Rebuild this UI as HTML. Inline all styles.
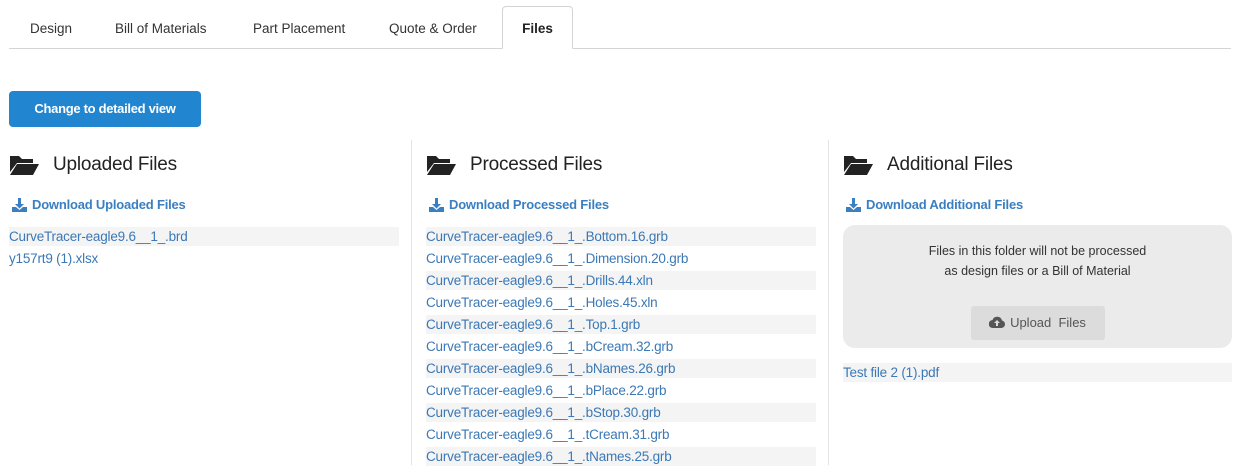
<!DOCTYPE html>
<html><head><meta charset="utf-8"><style>
*{box-sizing:border-box;margin:0;padding:0}
body{width:1234px;height:465px;overflow:hidden;background:#fff;font-family:"Liberation Sans",sans-serif;color:#222;position:relative}
.abs{position:absolute}
.tabline{left:9px;top:48px;width:1222px;height:1px;background:#d4d4d5}
.tab{top:7px;height:43px;line-height:43px;font-size:13.5px;color:#333;white-space:nowrap}
.active{top:6px;left:502px;width:71px;border:1px solid #d4d4d5;border-bottom:1px solid #fff;border-radius:4px 4px 0 0;background:#fff;text-align:center;font-weight:bold;color:#222}
.btn{left:9px;top:91px;width:192px;height:36px;background:#2185d0;border-radius:4px;color:#fff;font-weight:bold;font-size:13px;line-height:36px;text-align:center;letter-spacing:-0.3px}
.div{top:140px;width:1px;height:325px;background:#e3e3e3}
.col{top:152px;width:390px}
h2{font-weight:normal;font-size:19px;color:#222;height:26px;line-height:26px;display:flex;align-items:center;letter-spacing:-0.2px}
h2 svg{margin-right:14px}
.dl{margin-top:17px;font-size:13px;font-weight:bold;color:#3a7fc1;display:flex;align-items:center;height:18px;letter-spacing:-0.2px}
.dl svg{margin:0 5px 0 3px}
.list{margin-top:14px}
.row{height:22px;line-height:19px;font-size:13.5px;color:#3b78b5;letter-spacing:-0.2px}
.row span{display:block;height:19px}
.row:nth-child(odd) span{background:#f4f4f4}
.box{margin-top:12px;height:123px;background:#ebebeb;border-radius:12px;text-align:center;font-size:12.5px;color:#333;padding-top:16px;line-height:20px}
.up{display:inline-block;margin-top:25px;width:134px;height:34px;background:#dcdcdc;border-radius:3px;line-height:34px;color:#555;font-size:13px}
</style></head><body>
<div class="abs tabline"></div>
<div class="abs tab" style="left:30px">Design</div>
<div class="abs tab" style="left:115px">Bill of Materials</div>
<div class="abs tab" style="left:253px">Part Placement</div>
<div class="abs tab" style="left:389px">Quote &amp; Order</div>
<div class="abs tab active">Files</div>
<div class="abs btn">Change to detailed view</div>
<div class="abs div" style="left:411px"></div>
<div class="abs div" style="left:828px"></div>

<div class="abs col" style="left:9px">
<h2><svg width="30" height="22" viewBox="0 0 30 22"><path d="M1 2h9l3 3h11v4H8L1 18z" fill="#222"/><path d="M8 10h22l-6 11H1z" fill="#222"/></svg>Uploaded Files</h2>
<div class="dl"><svg width="15" height="15" viewBox="0 0 15 15"><path d="M6 1h3v6h3l-4.5 4.5L3 7h3z" fill="#3a7fc1"/><path d="M0 10h4l3.5 3 3.5-3h4v5H0z" fill="#3a7fc1"/></svg>Download Uploaded Files</div>
<div class="list">
<div class="row"><span>CurveTracer-eagle9.6__1_.brd</span></div>
<div class="row"><span>y157rt9 (1).xlsx</span></div>
</div></div>

<div class="abs col" style="left:426px">
<h2><svg width="30" height="22" viewBox="0 0 30 22"><path d="M1 2h9l3 3h11v4H8L1 18z" fill="#222"/><path d="M8 10h22l-6 11H1z" fill="#222"/></svg>Processed Files</h2>
<div class="dl"><svg width="15" height="15" viewBox="0 0 15 15"><path d="M6 1h3v6h3l-4.5 4.5L3 7h3z" fill="#3a7fc1"/><path d="M0 10h4l3.5 3 3.5-3h4v5H0z" fill="#3a7fc1"/></svg>Download Processed Files</div>
<div class="list">
<div class="row"><span>CurveTracer-eagle9.6__1_.Bottom.16.grb</span></div>
<div class="row"><span>CurveTracer-eagle9.6__1_.Dimension.20.grb</span></div>
<div class="row"><span>CurveTracer-eagle9.6__1_.Drills.44.xln</span></div>
<div class="row"><span>CurveTracer-eagle9.6__1_.Holes.45.xln</span></div>
<div class="row"><span>CurveTracer-eagle9.6__1_.Top.1.grb</span></div>
<div class="row"><span>CurveTracer-eagle9.6__1_.bCream.32.grb</span></div>
<div class="row"><span>CurveTracer-eagle9.6__1_.bNames.26.grb</span></div>
<div class="row"><span>CurveTracer-eagle9.6__1_.bPlace.22.grb</span></div>
<div class="row"><span>CurveTracer-eagle9.6__1_.bStop.30.grb</span></div>
<div class="row"><span>CurveTracer-eagle9.6__1_.tCream.31.grb</span></div>
<div class="row"><span>CurveTracer-eagle9.6__1_.tNames.25.grb</span></div>
</div></div>

<div class="abs col" style="left:843px;width:389px">
<h2><svg width="30" height="22" viewBox="0 0 30 22"><path d="M1 2h9l3 3h11v4H8L1 18z" fill="#222"/><path d="M8 10h22l-6 11H1z" fill="#222"/></svg>Additional Files</h2>
<div class="dl"><svg width="15" height="15" viewBox="0 0 15 15"><path d="M6 1h3v6h3l-4.5 4.5L3 7h3z" fill="#3a7fc1"/><path d="M0 10h4l3.5 3 3.5-3h4v5H0z" fill="#3a7fc1"/></svg>Download Additional Files</div>
<div class="box">Files in this folder will not be processed<br>as design files or a Bill of Material<br>
<span class="up"><svg width="16" height="12" viewBox="0 0 16 12" style="vertical-align:-1px;margin-right:5px"><path d="M4 12a4 4 0 0 1-.5-8A5 5 0 0 1 13 4.5 3.8 3.8 0 0 1 12.5 12z" fill="#555"/><path d="M8 4l-3 3h2v3h2V7h2z" fill="#dcdcdc"/></svg>Upload&nbsp; Files</span></div>
<div class="list" style="margin-top:15px">
<div class="row"><span>Test file 2 (1).pdf</span></div>
</div></div>
</body></html>
